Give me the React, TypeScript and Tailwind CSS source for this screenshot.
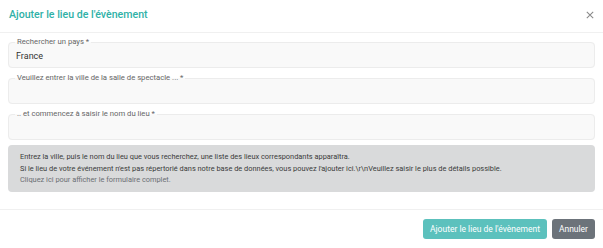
import React from 'react';

const Field: React.FC<{ label: string; value?: string }> = ({ label, value }) => (
  <fieldset className="h-[31px] rounded-[4px] border border-[#ececec] bg-[#f9f9f9] px-[6px] pb-0">
    <legend className="px-[2px] text-[7.7px] leading-[10px] text-[#666]">{label}</legend>
    <div className="pl-[1px] pt-[4px] text-[9px] leading-[11px] text-[#333]">{value}</div>
  </fieldset>
);

export default function App() {
  return (
    <div className="w-[603px] h-[248px] bg-white font-['Roboto',sans-serif]">
      <header className="flex h-[33px] items-center justify-between border-b border-[#f0f0f0] pb-[3px] pl-[9px] pr-[9px]">
        <h1 className="text-[10.6px] font-medium text-[#2fb1a7]">Ajouter le lieu de l'évènement</h1>
        <svg width="8" height="8" viewBox="0 0 10 10" className="text-[#888]">
          <path d="M1 1L9 9M9 1L1 9" stroke="currentColor" strokeWidth="1.3" />
        </svg>
      </header>
      <main className="flex flex-col gap-[5px] px-[8px] pt-[4px]">
        <Field label="Rechercher un pays *" value="France" />
        <Field label="Veuillez entrer la ville de la salle de spectacle ... *" />
        <Field label=".. et commencez à saisir le nom du lieu *" />
        <div className="h-[47px] rounded-[4px] bg-[#d9dadb] px-[12px] pt-[6px] text-[7.4px] leading-[11.5px] text-[#3a3a3a]">
          <p>Entrez la ville, puis le nom du lieu que vous recherchez, une liste des lieux correspondants apparaîtra.</p>
          <p>Si le lieu de votre événement n'est pas répertorié dans notre base de données, vous pouvez l'ajouter ici.\r\nVeuillez saisir le plus de détails possible.</p>
          <p className="text-[#6b6f73]">Cliquez ici pour afficher le formulaire complet.</p>
        </div>
      </main>
      <footer className="mt-[17px] flex justify-end gap-[5px] border-t border-[#f0f0f0] pr-[8px] pt-[9px]">
        <button className="h-[20px] rounded-[3px] bg-[#5cc1bd] px-[7px] text-[8.5px] text-white">Ajouter le lieu de l'évènement</button>
        <button className="h-[20px] rounded-[3px] bg-[#6c737a] px-[7px] text-[8.5px] text-white">Annuler</button>
      </footer>
    </div>
  );
}
